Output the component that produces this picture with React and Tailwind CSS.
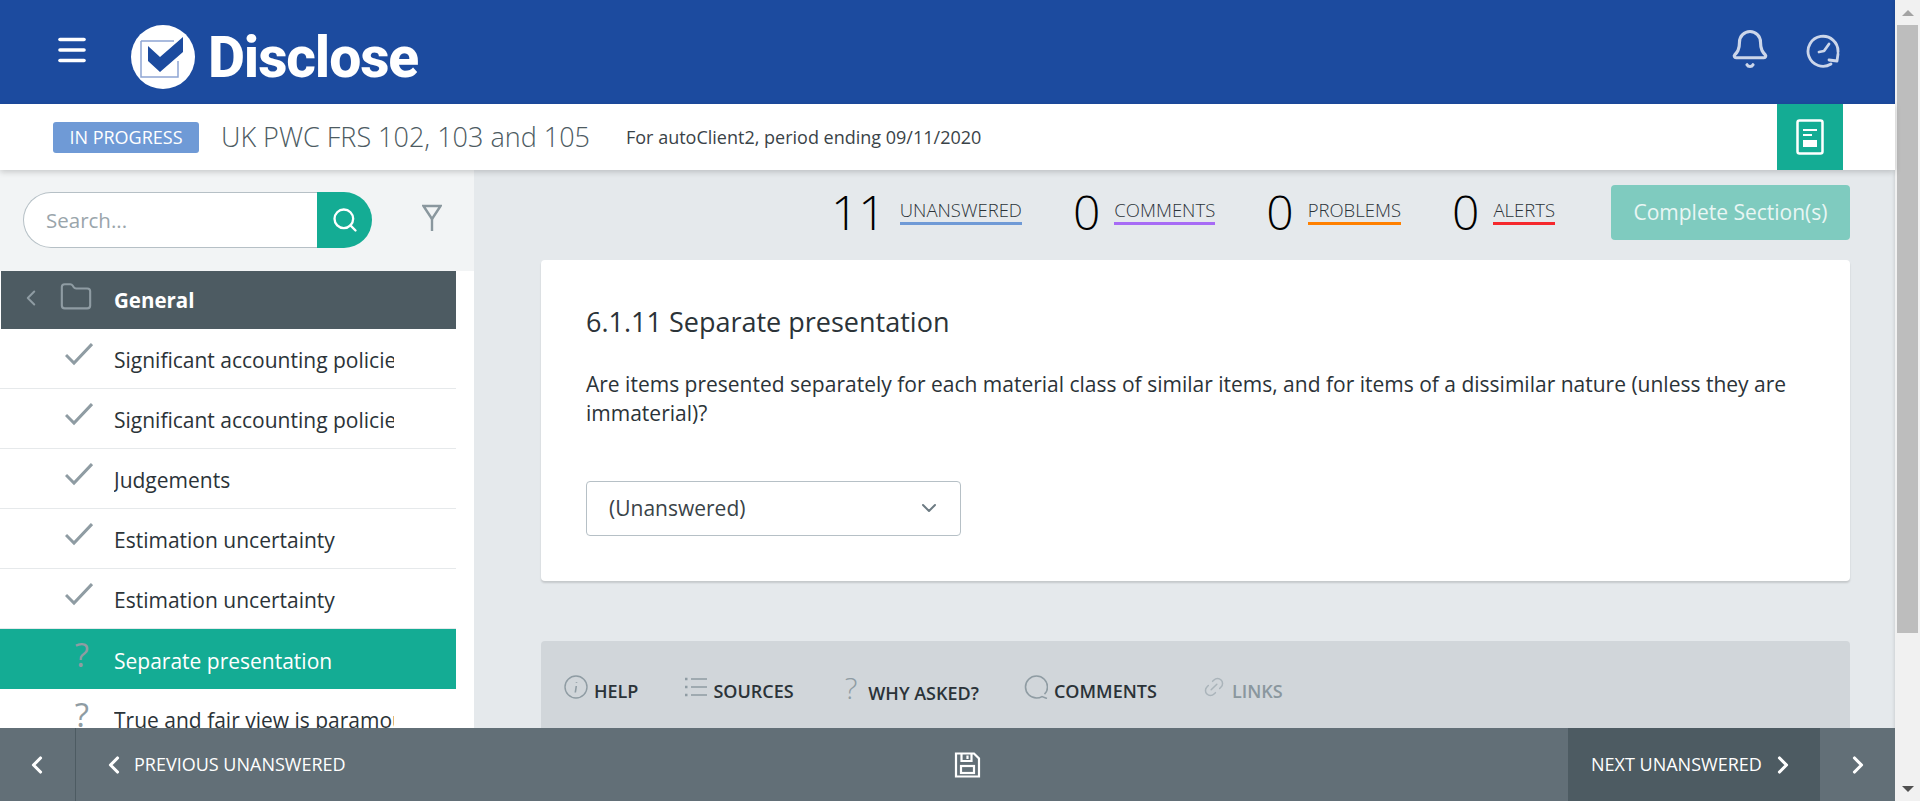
import React from "react";
import {
  Bell,
  ChevronDown,
  ChevronLeft,
  ChevronRight,
  Folder,
  Link2,
  Menu,
  Search,
} from "lucide-react";

const rows = [
  { label: "Significant accounting policies", done: true },
  { label: "Significant accounting policies", done: true },
  { label: "Judgements", done: true },
  { label: "Estimation uncertainty", done: true },
  { label: "Estimation uncertainty", done: true },
  { label: "Separate presentation", done: false, active: true },
  { label: "True and fair view is paramount", done: false },
];

const stats = [
  { count: "11", label: "UNANSWERED", line: "border-[#6f9ad6]", gap: "mr-[51px]" },
  { count: "0", label: "COMMENTS", line: "border-[#a76bf5]", gap: "mr-[51px]" },
  { count: "0", label: "PROBLEMS", line: "border-[#ff8000]", gap: "mr-[51px]" },
  { count: "0", label: "ALERTS", line: "border-[#f5282d]", gap: "mr-[56px]" },
];

const LogoMark = () => (
  <svg width="64" height="64" viewBox="0 0 64 64" className="shrink-0">
    <circle cx="32" cy="32" r="32" fill="#fff" />
    <path d="M10 16h33M10 16v36h37V36" fill="none" stroke="#8ea5d4" strokeWidth="1.500" />
    <path d="M17 21L29 32 52 12V27L29 47 17 36z" fill="#1c4b9f" />
  </svg>
);

const ClockRefresh = () => (
  <svg width="34" height="34" viewBox="0 0 34 34" fill="none" stroke="#ccd6ea" strokeWidth="2.800" strokeLinecap="round" strokeLinejoin="round">
    <path d="M32 18A15 15 0 1 0 25 30" />
    <path d="M23 26l8 1 1-7" />
    <path d="M23 10l-5 7-5 1" />
  </svg>
);

const DocIcon = () => (
  <svg width="28" height="36" viewBox="0 0 28 36" fill="none">
    <rect x="1.500" y="1.500" width="25" height="33" rx="2" stroke="#fff" strokeWidth="2.500" />
    <path d="M7 11h14M7 16h9" stroke="#fff" strokeWidth="2" />
    <rect x="7" y="21" width="14" height="7" fill="#fff" />
  </svg>
);

const FilterIcon = () => (
  <svg width="20" height="27" viewBox="0 0 20 27" fill="none" stroke="#8a979e" strokeWidth="2.400">
    <path d="M1.500 2h17L10 15z" />
    <path d="M10 14v13" />
  </svg>
);

const CheckMark = () => (
  <svg width="28" height="23" viewBox="0 0 28 23" fill="none" stroke="#8f9ca3" strokeWidth="3">
    <path d="M1 12l8 8L27 1" />
  </svg>
);

const InfoIcon = () => (
  <svg width="24" height="24" viewBox="0 0 24 24" fill="none" stroke="#8f9ca3" strokeWidth="1.400">
    <circle cx="12" cy="12" r="11" />
    <path d="M12.500 7v.8M12.300 11l-1 6.500" strokeWidth="1.600" />
  </svg>
);

const ListIcon = () => (
  <svg width="22" height="20" viewBox="0 0 22 20" fill="none" stroke="#8f9ca3" strokeWidth="1.600">
    <path d="M6 2h16M6 10h16M6 18h16" />
    <path d="M0 2h2.500M0 10h2.500M0 18h2.500" strokeWidth="2.400" />
  </svg>
);

const BubbleIcon = () => (
  <svg width="24" height="24" viewBox="0 0 24 24" fill="none" stroke="#8f9ca3" strokeWidth="1.600">
    <path d="M23 23.500l-5-1.900C16.500 22.500 14.500 23 12.500 23A11 11 0 1 1 23.500 12c0 3.500-1.200 5.500-3 7.200" />
  </svg>
);

const SaveIcon = () => (
  <svg width="27" height="26" viewBox="0 0 27 26" fill="none" stroke="#fff" strokeWidth="2.200">
    <path d="M2 1.500h18l5 5V24.500H2z" />
    <path d="M7.500 2v7h10V2M13.500 3.500v3.500" />
    <rect x="7" y="14" width="13" height="7" />
  </svg>
);

const FootLeft = () => <ChevronLeft size={28} strokeWidth={2.700} />;
const FootRight = ({ className }) => <ChevronRight size={28} strokeWidth={2.700} className={className} />;

const SidebarRow = ({ row }) => (
  <div
    className={`flex h-[60px] shrink-0 items-center ${
      row.active ? "bg-[#14ac94] text-white" : "border-b border-[#e6e9eb] text-[#2b3338]"
    }`}
  >
    <div className="flex w-[114px] shrink-0 justify-end pr-[21px] pb-[9px]">
      {row.done ? (
        <CheckMark />
      ) : (
        <span className="mr-[4px] text-[33px] leading-none text-[#8f9ca3]">?</span>
      )}
    </div>
    <span className="w-[280px] overflow-hidden pt-[5px] text-[21px] whitespace-nowrap">{row.label}</span>
  </div>
);

const TabItem = ({ icon, label, muted, className }) => (
  <div className={`flex items-center gap-[6px] ${className}`}>
    <span className="flex -translate-y-[5px]">{icon}</span>
    <span className={`text-[18px] font-semibold ${muted ? "text-[#8a979e]" : "text-[#2b3338]"}`}>{label}</span>
  </div>
);

export default function App() {
  return (
    <div className="flex h-[801px] overflow-hidden bg-[#e5e9ec] font-['Open_Sans',sans-serif]">
      <div className="flex min-w-0 flex-1 flex-col">
        {/* top bar */}
        <header className="flex h-[104px] shrink-0 items-center bg-[#1c4b9f] pr-[55px]">
          <Menu size={36} strokeWidth={2.400} className="ml-[54px] -translate-y-[2px] text-white" />
          <div className="ml-[41px] flex translate-y-[5px] items-center gap-[13px]">
            <LogoMark />
            <span className="font-['Roboto',sans-serif] text-[57px] leading-none font-extrabold tracking-[-1.100px] text-white">
              Disclose
            </span>
          </div>
          <div className="ml-auto flex -translate-y-[1px] items-center gap-[35px]">
            <Bell size={42} strokeWidth={1.800} className="-translate-y-[2px] text-[#ccd6ea]" />
            <ClockRefresh />
          </div>
        </header>

        {/* checklist title */}
        <div className="relative z-10 flex h-[66px] shrink-0 items-center bg-white pl-[53px] pr-[52px] shadow-[0_2px_6px_rgba(0,0,0,0.18)]">
          <span className="flex h-[31px] w-[146px] items-center justify-center rounded-[3px] bg-[#6f9ad6] text-[18px] text-white">
            IN PROGRESS
          </span>
          <span className="ml-[22px] text-[27px] font-light text-[#4d5b62]">UK PWC FRS 102, 103 and 105</span>
          <span className="ml-[36px] text-[18px] text-[#3a4348]">For autoClient2, period ending 09/11/2020</span>
          <div className="ml-auto flex h-[66px] w-[66px] items-center justify-center bg-[#14ac94]">
            <DocIcon />
          </div>
        </div>

        <div className="flex min-h-0 flex-1">
          {/* sidebar */}
          <aside className="flex w-[474px] shrink-0 flex-col overflow-hidden bg-white">
            <div className="flex h-[101px] shrink-0 items-start bg-[#f2f4f5] pl-[23px] pt-[22px]">
              <div className="flex h-[56px] w-[349px]">
                <span className="flex flex-1 items-center rounded-l-full border-y border-l border-[#b6c0c6] bg-white pl-[22px] text-[20.500px] text-[#9aa5ab]">
                  Search...
                </span>
                <span className="flex w-[55px] items-center justify-center rounded-r-full bg-[#14ac94]">
                  <Search size={28} strokeWidth={2} className="text-white" />
                </span>
              </div>
              <span className="ml-[50px] mt-[12px]">
                <FilterIcon />
              </span>
            </div>
            <div className="w-[456px]">
              <div className="ml-[1px] flex h-[58px] items-center bg-[#4d5b62]">
                <ChevronLeft size={26} strokeWidth={1.800} className="ml-[17px] -translate-y-[2px] text-[#8f9ca3]" />
                <Folder size={34} strokeWidth={1.500} className="ml-[15px] -translate-y-[3px] text-[#8f9ca3]" />
                <span className="ml-[21px] text-[20.500px] font-bold text-white">General</span>
              </div>
              {rows.map((row, i) => (
                <SidebarRow key={i} row={row} />
              ))}
            </div>
          </aside>

          {/* content */}
          <main className="min-w-0 flex-1 overflow-hidden pl-[67px] pr-[45px]">
            <div className="flex h-[90px] items-start justify-end pt-[15px]">
              {stats.map((s) => (
                <div key={s.label} className={`flex items-center ${s.gap}`}>
                  <span className="mr-[14px] text-[48px] leading-[54px] font-light text-black">{s.count}</span>
                  <span className={`-translate-y-[1px] border-b-[3px] text-[18.500px] leading-[24px] font-light text-[#2b3338] ${s.line}`}>
                    {s.label}
                  </span>
                </div>
              ))}
              <button className="h-[55px] w-[239px] rounded-[4px] bg-[#7fcbbf] text-[21px] text-[#e9f6f4]">
                Complete Section(s)
              </button>
            </div>

            <section className="h-[321px] rounded-[4px] bg-white px-[45px] pt-[45px] shadow-[0_2px_2px_rgba(0,0,0,0.14)]">
              <h2 className="text-[27px] leading-[34px] text-[#2b3338]">6.1.11 Separate presentation</h2>
              <p className="mt-[31px] text-[21px] leading-[29.400px] text-[#2b3338]">
                Are items presented separately for each material class of similar items, and for items of a dissimilar
                nature (unless they are immaterial)?
              </p>
              <div className="mt-[52px] flex h-[55px] w-[375px] items-center justify-between rounded-[4px] border border-[#b6c0c6] pl-[22px] pr-[19px] text-[21px] text-[#3a4348]">
                (Unanswered)
                <ChevronDown size={24} strokeWidth={2} className="text-[#6d7b83]" />
              </div>
            </section>

            <section className="mt-[60px] flex h-[120px] items-start rounded-t-[4px] bg-[#d1d6da] pl-[23px] pt-[37px]">
              <TabItem icon={<InfoIcon />} label="HELP" className="mr-[47px]" />
              <TabItem icon={<ListIcon />} label="SOURCES" className="mr-[51px]" />
              <TabItem
                icon={<span className="text-[30px] leading-[30px] font-light text-[#8f9ca3]">?</span>}
                label="WHY ASKED?"
                className="mr-[45px] gap-[11px]"
              />
              <TabItem icon={<BubbleIcon />} label="COMMENTS" className="mr-[45px]" />
              <TabItem
                icon={<Link2 size={24} strokeWidth={1.500} className="-rotate-45 text-[#aab4ba]" />}
                label="LINKS"
                muted
              />
            </section>
          </main>
        </div>

        {/* footer nav */}
        <footer className="relative z-10 flex h-[73px] shrink-0 items-center bg-[#626f77] text-white">
          <div className="flex h-full w-[76px] items-center justify-center border-r border-[#4d5b62] pr-[1px]">
            <FootLeft />
          </div>
          <div className="ml-[24px] flex items-center gap-[6px] text-[18px]">
            <FootLeft />
            PREVIOUS UNANSWERED
          </div>
          <span className="ml-[608px]">
            <SaveIcon />
          </span>
          <div className="ml-auto flex h-full w-[252px] items-center bg-[#4d5b62] pl-[23px] text-[18px]">
            NEXT UNANSWERED
            <FootRight className="ml-[7px]" />
          </div>
          <div className="flex h-full w-[75px] items-center justify-center">
            <FootRight />
          </div>
        </footer>
      </div>

      {/* browser scrollbar */}
      <div className="flex w-[25px] shrink-0 flex-col items-center justify-between bg-[#f1f1f1] shadow-[-1px_0_3px_rgba(0,0,0,0.1)]">
        <div className="flex h-[25px] w-full items-center justify-center">
          <span className="h-0 w-0 border-x-[6px] border-b-[6px] border-x-transparent border-b-[#a3a3a3]" />
        </div>
        <div className="mb-auto h-[608px] w-[21px] bg-[#bdbdbd]" />
        <div className="flex h-[25px] w-full items-center justify-center">
          <span className="h-0 w-0 border-x-[6px] border-t-[6px] border-x-transparent border-t-[#505050]" />
        </div>
      </div>
    </div>
  );
}
